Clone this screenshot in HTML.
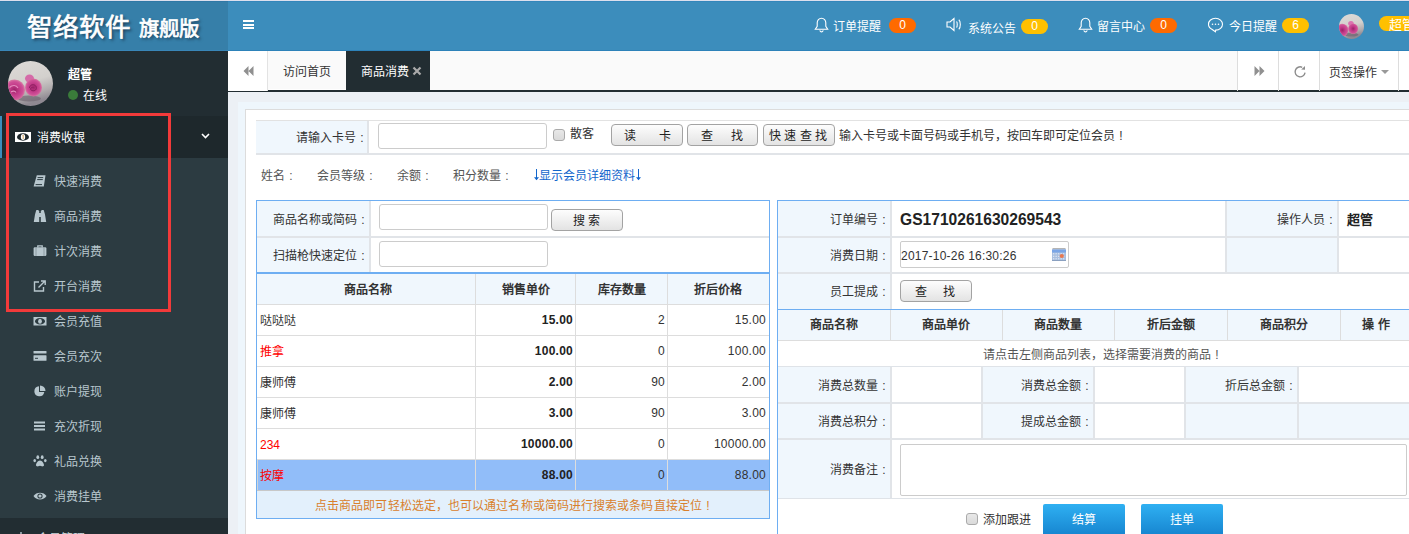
<!DOCTYPE html>
<html lang="zh-CN"><head><meta charset="utf-8">
<style>
*{box-sizing:border-box;margin:0;padding:0}
html,body{width:1409px;height:534px;overflow:hidden}
body{position:relative;font-family:"Liberation Sans",sans-serif;font-size:12px;color:#333;background:#ecf0f5}
.a{position:absolute}
.t{position:absolute;white-space:nowrap;line-height:1;margin-top:1px}
.c{display:inline-block;width:12px;text-align:center;font-style:normal}
/* header */
#topline{left:0;top:0;width:1409px;height:1px;background:#dcdfed}
#logo{left:0;top:1px;width:228px;height:50px;background:#367fa9}
#nav{left:228px;top:1px;width:1181px;height:50px;background:#3c8dbc}
.badge{position:absolute;height:15px;border-radius:8px;color:#fff;font-size:12px;line-height:15px;text-align:center;width:27px}
.orange{background:#ff6a00}
.yellow{background:#ffc000}
/* sidebar */
#side{left:0;top:51px;width:228px;height:483px;background:#222d32}
.mi{position:absolute;left:0;width:228px;height:35px;color:#b8c7ce;font-size:12px}
.mi span{position:absolute;left:54px;top:13px;line-height:12px}
.mi svg{position:absolute;left:33px;top:12px}
/* tabs */
#tabs{left:228px;top:51px;width:1181px;height:41px;background:#fafafa}
/* content */
.lbl{position:absolute;background:#f0f7fd;text-align:right}
.inp{position:absolute;background:#fff;border:1px solid #ccc;border-radius:3px}
.btn{position:absolute;border:1px solid #a3a3a3;border-radius:4px;background:linear-gradient(#fdfdfd,#e3e3e3);color:#222;font-size:12px;line-height:20px;text-align:center}
.hl{position:absolute;background:#ddd}
.bl{position:absolute;background:#6eaef2}
</style></head><body>

<!-- HEADER -->
<div id="topline" class="a"></div>
<div id="logo" class="a"></div>
<div id="nav" class="a"></div>
<div class="a" style="left:0;top:1px;width:228px;height:1px;background:#2f78a6"></div><div class="a" style="left:228px;top:1px;width:1181px;height:1px;background:#3386bb"></div>
<div class="a" style="left:0;top:50px;width:228px;height:1px;background:#3986b8"></div><div class="a" style="left:228px;top:50px;width:1181px;height:1px;background:#2d82b9"></div>
<div class="t" style="left:27px;top:13.5px;font-family:'Liberation Serif',serif;font-weight:normal;font-size:25.5px;color:#fff;-webkit-text-stroke:0.7px #fff;text-shadow:2px 2px 3px #1b3a52">智络软件</div>
<div class="t" style="left:139px;top:18px;font-family:'Liberation Serif',serif;font-weight:normal;font-size:20.5px;color:#fff;-webkit-text-stroke:0.7px #fff;text-shadow:2px 2px 3px #1b3a52">旗舰版</div>
<!-- hamburger -->
<div class="a" style="left:243px;top:20px;width:11px;height:2px;background:#fff"></div>
<div class="a" style="left:243px;top:24px;width:11px;height:2px;background:#fff"></div>
<div class="a" style="left:243px;top:27px;width:11px;height:2px;background:#fff"></div>

<!-- notifications -->
<svg class="a" style="left:814px;top:17px" width="15" height="16" viewBox="0 0 15 16"><path d="M7.5 1.2c-2.6 0-4.3 2-4.3 4.6v3.6L1.3 12.3h12.4l-1.9-2.9V5.8c0-2.6-1.7-4.6-4.3-4.6z M5.8 13.3c.3 1 .9 1.6 1.7 1.6s1.4-.6 1.7-1.6" fill="none" stroke="#fff" stroke-width="1.1"/></svg>
<div class="t" style="left:833px;top:20px;color:#fff;font-size:12px">订单提醒</div>
<div class="badge orange" style="left:889px;top:18px">0</div>

<svg class="a" style="left:946px;top:17px" width="17" height="15" viewBox="0 0 17 15"><path d="M1 5h3l4-3.5v12L4 10H1z" fill="none" stroke="#fff" stroke-width="1.1"/><path d="M10.5 4.5c1 .8 1 5.2 0 6M12.8 2.8c2 1.5 2 7.9 0 9.4" fill="none" stroke="#fff" stroke-width="1.1"/></svg>
<div class="t" style="left:968px;top:22px;color:#fff;font-size:12px">系统公告</div>
<div class="badge yellow" style="left:1021px;top:19px">0</div>

<svg class="a" style="left:1078px;top:17px" width="15" height="16" viewBox="0 0 15 16"><path d="M7.5 1.2c-2.6 0-4.3 2-4.3 4.6v3.6L1.3 12.3h12.4l-1.9-2.9V5.8c0-2.6-1.7-4.6-4.3-4.6z M5.8 13.3c.3 1 .9 1.6 1.7 1.6s1.4-.6 1.7-1.6" fill="none" stroke="#fff" stroke-width="1.1"/></svg>
<div class="t" style="left:1097px;top:20px;color:#fff;font-size:12px">留言中心</div>
<div class="badge orange" style="left:1150px;top:18px">0</div>

<svg class="a" style="left:1207px;top:17px" width="17" height="16" viewBox="0 0 17 16"><path d="M8.5 1.3c-4 0-7 2.6-7 5.9 0 2.2 1.4 4 3.4 5l3.5 2.5.3-1.6c3.9-.1 6.8-2.7 6.8-5.9S12.5 1.3 8.5 1.3z" fill="none" stroke="#fff" stroke-width="1.1"/><circle cx="5.5" cy="7.3" r=".8" fill="#fff"/><circle cx="8.5" cy="7.3" r=".8" fill="#fff"/><circle cx="11.5" cy="7.3" r=".8" fill="#fff"/></svg>
<div class="t" style="left:1229px;top:20px;color:#fff;font-size:12px">今日提醒</div>
<div class="badge yellow" style="left:1282px;top:18px">6</div>

<!-- header avatar -->
<svg class="a" style="left:1339px;top:14px" width="25" height="25" viewBox="0 0 45 45"><defs><clipPath id="c2"><circle cx="22.5" cy="22.5" r="22.5"/></clipPath></defs><g clip-path="url(#c2)"><rect width="45" height="45" fill="url(#bg1)"/><ellipse cx="22" cy="37" rx="13" ry="3.5" fill="#6e6470" opacity=".7"/><ellipse cx="6" cy="29" rx="11" ry="11.5" fill="url(#r1)"/><ellipse cx="21.5" cy="17" rx="5" ry="4.5" fill="#dc72b0"/><ellipse cx="25.5" cy="26.5" rx="9" ry="9.5" fill="url(#r1)"/></g></svg>
<div class="a" style="left:1379px;top:16px;width:40px;height:15px;border-radius:8px 0 0 8px;background:#ffc000"></div>
<div class="t" style="left:1389px;top:17px;color:#fff;font-size:13px">超管</div>

<!-- SIDEBAR -->
<div id="side" class="a"></div>
<svg class="a" style="left:8px;top:61px" width="45" height="45" viewBox="0 0 45 45"><defs><clipPath id="c1"><circle cx="22.5" cy="22.5" r="22.5"/></clipPath><linearGradient id="bg1" x1="0" y1="0" x2=".3" y2="1"><stop offset="0" stop-color="#dedbd8"/><stop offset=".55" stop-color="#d3d0cd"/><stop offset=".82" stop-color="#b0abad"/><stop offset="1" stop-color="#8f8992"/></linearGradient><radialGradient id="r1" cx=".5" cy=".5" r=".5"><stop offset="0" stop-color="#9c2268"/><stop offset=".45" stop-color="#c23a88"/><stop offset=".8" stop-color="#cf4f97"/><stop offset="1" stop-color="#d8739f" stop-opacity=".9"/></radialGradient></defs><g clip-path="url(#c1)"><rect width="45" height="45" fill="url(#bg1)"/><ellipse cx="21" cy="37.5" rx="12" ry="3" fill="#6a606c" opacity=".6"/><ellipse cx="6.5" cy="29" rx="10.5" ry="10.5" fill="url(#r1)"/><ellipse cx="21.5" cy="17.5" rx="4.5" ry="4" fill="#d56aa8"/><ellipse cx="25.5" cy="26.5" rx="8.5" ry="9" fill="url(#r1)"/><path d="M21.5 27c0-3.5 5-4.5 6.5-1.5s-1.5 5-4 4-1.5-3 .5-3" fill="none" stroke="#8a1f5e" stroke-width="1"/><path d="M1.5 26.5c3-3 7-2.5 8.5.5M3 31c2-1.5 4-1 5 .5" fill="none" stroke="#e48cbd" stroke-width="1.1"/></g></svg>
<div class="t" style="left:68px;top:68px;color:#fff;font-weight:bold;font-size:12px">超管</div>
<div class="a" style="left:68px;top:90px;width:10px;height:10px;border-radius:5px;background:#3a7b3a"></div>
<div class="t" style="left:83px;top:89px;color:#fff;font-size:12px">在线</div>

<!-- menu header -->
<div class="a" style="left:0;top:116px;width:228px;height:42px;background:#1e282c"></div>
<div class="a" style="left:0;top:116px;width:2px;height:42px;background:#3c8dbc"></div>
<svg class="a" style="left:15px;top:132px" width="16" height="10" viewBox="0 0 16 10"><rect x="0" y="0" width="16" height="10" fill="#fff"/><ellipse cx="8" cy="5" rx="6" ry="3.7" fill="#1e282c"/><ellipse cx="8" cy="5" rx="2.2" ry="3" fill="#fff"/><path d="M7.6 3.5l.6-.5v4" stroke="#c89040" stroke-width=".8" fill="none"/></svg>
<div class="t" style="left:37px;top:131px;color:#fff;font-size:12px">消费收银</div>
<svg class="a" style="left:201px;top:133px" width="9" height="6" viewBox="0 0 9 6"><path d="M1 1l3.5 3.5L8 1" fill="none" stroke="#fff" stroke-width="1.6"/></svg>

<!-- treeview -->
<div class="a" style="left:0;top:158px;width:228px;height:360px;background:#2c3b41"></div>

<div class="mi" style="top:163px"><svg width="14" height="12" viewBox="0 0 14 12"><path d="M3.8 0.3H12.5L10.8 11.6H0.6z" fill="#b8c7ce"/><path d="M4.6 2.6h5.6M4.2 4.6h5.6M2.6 9.6h6.4" stroke="#2c3b41" stroke-width="1"/></svg><span>快速消费</span></div>
<div class="mi" style="top:198px"><svg width="14" height="12" viewBox="0 0 14 12"><path d="M0.8 12L2 4.5 3 1h3.2v11zM13.2 12L12 4.5 11 1H7.8v11z" fill="#b8c7ce"/><rect x="5.5" y="3" width="3" height="4" fill="#b8c7ce"/><rect x="3.2" y="0" width="2.4" height="1.6" fill="#b8c7ce"/><rect x="8.4" y="0" width="2.4" height="1.6" fill="#b8c7ce"/></svg><span>商品消费</span></div>
<div class="mi" style="top:233px"><svg width="14" height="12" viewBox="0 0 14 12"><rect x="0.6" y="2.2" width="12.8" height="8.8" rx="1.3" fill="#b8c7ce"/><path d="M4.8 2.4V0.8h4.4v1.6" fill="none" stroke="#b8c7ce" stroke-width="1.3"/><path d="M3 2.5v8.5M11 2.5v8.5" stroke="#2c3b41" stroke-width=".6" opacity=".5"/></svg><span>计次消费</span></div>
<div class="mi" style="top:268px"><svg width="14" height="12" viewBox="0 0 14 12"><path d="M6 2H1.5v9h9V7" fill="none" stroke="#b8c7ce" stroke-width="1.4"/><path d="M5.5 7.5L12 1M8 1h4.2v4" fill="none" stroke="#b8c7ce" stroke-width="1.4"/></svg><span>开台消费</span></div>
<div class="mi" style="top:303px"><svg width="14" height="12" viewBox="0 0 14 12"><rect x="0.5" y="2" width="13" height="8.5" fill="#b8c7ce"/><ellipse cx="7" cy="6.25" rx="5" ry="3.2" fill="#2c3b41"/><ellipse cx="7" cy="6.25" rx="1.9" ry="2.6" fill="#b8c7ce"/></svg><span>会员充值</span></div>
<div class="mi" style="top:338px"><svg width="14" height="12" viewBox="0 0 14 12"><rect x="0.5" y="1" width="13" height="2.6" rx=".6" fill="#b8c7ce"/><rect x="0.5" y="5.2" width="13" height="5.6" rx=".6" fill="#b8c7ce"/><path d="M2 8.3h3" stroke="#2c3b41" stroke-width="1"/></svg><span>会员充次</span></div>
<div class="mi" style="top:373px"><svg width="14" height="12" viewBox="0 0 14 12"><path d="M6 1.2A5 5 0 1 0 11.3 7H6z" fill="#b8c7ce"/><path d="M7 0.5V6h5.5A5.5 5.5 0 0 0 7 .5z" fill="#b8c7ce"/></svg><span>账户提现</span></div>
<div class="mi" style="top:408px"><svg width="14" height="12" viewBox="0 0 14 12"><rect x="1" y="1.5" width="11" height="2" fill="#b8c7ce"/><rect x="1" y="5" width="11" height="2" fill="#b8c7ce"/><rect x="1" y="8.5" width="11" height="2" fill="#b8c7ce"/></svg><span>充次折现</span></div>
<div class="mi" style="top:443px"><svg width="14" height="12" viewBox="0 0 14 12"><path d="M7 5.5c-2.2 0-4 3-4 4.6 0 1.4 1.5 1.5 2.2 1.2.7-.3 1.1-.5 1.8-.5s1.1.2 1.8.5c.7.3 2.2.2 2.2-1.2 0-1.6-1.8-4.6-4-4.6z" fill="#b8c7ce"/><ellipse cx="4.8" cy="2.2" rx="1.4" ry="1.9" fill="#b8c7ce"/><ellipse cx="9.2" cy="2.2" rx="1.4" ry="1.9" fill="#b8c7ce"/><ellipse cx="1.7" cy="5.6" rx="1.3" ry="1.6" fill="#b8c7ce"/><ellipse cx="12.3" cy="5.6" rx="1.3" ry="1.6" fill="#b8c7ce"/></svg><span>礼品兑换</span></div>
<div class="mi" style="top:478px"><svg width="14" height="12" viewBox="0 0 14 12"><path d="M0.5 6C3 1.5 11 1.5 13.5 6 11 10.5 3 10.5 .5 6z" fill="#b8c7ce"/><circle cx="7" cy="6" r="2.6" fill="#2c3b41"/><circle cx="7" cy="6" r="1.6" fill="#b8c7ce"/></svg><span>消费挂单</span></div>

<div class="t" style="left:37px;top:532px;color:#c8d4da">会员管理</div>
<div class="a" style="left:20px;top:532px;width:2px;height:2px;background:#8a9aa2"></div>
<!-- red annotation -->
<div class="a" style="left:6px;top:113px;width:165px;height:199px;border:3px solid #f23a3a"></div>

<!-- TABS -->
<div id="tabs" class="a"></div>
<div class="a" style="left:228px;top:51px;width:40px;height:41px;background:#fff;border-right:1px solid #e3e3e3"></div>
<svg class="a" style="left:243px;top:66px" width="11" height="10" viewBox="0 0 11 10"><path d="M5.5 0v10L0.5 5zM10.5 0v10L5.5 5z" fill="#909090"/></svg>
<div class="a" style="left:268px;top:90px;width:1141px;height:2px;background:#222d32"></div>
<div class="a" style="left:228px;top:91px;width:40px;height:1px;background:#222d32"></div>
<div class="a" style="left:269px;top:89px;width:77px;height:1px;background:#fff"></div>
<div class="t" style="left:283px;top:65px;color:#333;font-size:12px">访问首页</div>
<div class="a" style="left:346px;top:51px;width:84px;height:41px;background:#222d32"></div>
<div class="t" style="left:361px;top:65px;color:#fff;font-size:12px">商品消费</div>
<svg class="a" style="left:412px;top:66px" width="10" height="10" viewBox="0 0 10 10"><path d="M1.5 1.5l7 7M8.5 1.5l-7 7" stroke="#aaa" stroke-width="2.2"/></svg>

<div class="a" style="left:1237px;top:51px;width:172px;height:39px;background:#fff"></div>
<div class="a" style="left:1237px;top:51px;width:1px;height:40px;background:#ddd"></div>
<div class="a" style="left:1278px;top:51px;width:1px;height:40px;background:#ddd"></div>
<div class="a" style="left:1319px;top:51px;width:1px;height:40px;background:#ddd"></div>
<div class="a" style="left:1398px;top:51px;width:1px;height:40px;background:#ddd"></div>
<svg class="a" style="left:1254px;top:66px" width="11" height="10" viewBox="0 0 11 10"><path d="M0.5 0v10L5.5 5zM5.5 0v10l5-5z" fill="#909090"/></svg>
<svg class="a" style="left:1293px;top:65px" width="14" height="14" viewBox="0 0 14 14"><path d="M12.05 7.6A5 5 0 1 1 9.2 2.3" fill="none" stroke="#8c8c8c" stroke-width="1.4"/><path d="M8.2 4.6L12 0.9V4.7z" fill="#8c8c8c"/></svg>
<div class="t" style="left:1329px;top:66px;color:#333;font-size:12px">页签操作</div>
<svg class="a" style="left:1381px;top:70px" width="8" height="5" viewBox="0 0 8 5"><path d="M0 0h8L4 4z" fill="#999"/></svg>

<!-- CONTENT -->
<div class="a" style="left:238px;top:102px;width:1171px;height:432px;background:#eef6fc"></div>
<div class="a" style="left:245px;top:109px;width:1164px;height:425px;background:#fff;border:1px solid #dcdcdc;border-right:none;border-bottom:none"></div>


<!-- card row -->
<div class="a" style="left:256px;top:120px;width:1153px;height:35px;border-top:1px solid #e2e2e2;border-bottom:2px solid #e1e4e8;background:#fff"></div>
<div class="lbl" style="left:256px;top:121px;width:113px;height:32px;border-right:2px solid #e1e4e8"></div>
<div class="t" style="left:296px;top:131px;color:#333">请输入卡号<i class="c">:</i></div>
<div class="inp" style="left:378px;top:123px;width:169px;height:26px"></div>
<div class="a" style="left:553px;top:129px;width:12px;height:12px;border:1px solid #aaa;border-radius:3px;background:linear-gradient(#e8e8e8,#dadada)"></div>
<div class="t" style="left:570px;top:127px;color:#333">散客</div>
<div class="btn" style="left:611px;top:124px;width:72px;height:22px"><span class="t" style="left:12px;top:4px">读</span><span class="t" style="left:47px;top:4px">卡</span></div>
<div class="btn" style="left:687px;top:124px;width:71px;height:22px"><span class="t" style="left:13px;top:4px">查</span><span class="t" style="left:43px;top:4px">找</span></div>
<div class="btn" style="left:763px;top:124px;width:72px;height:22px"><span class="t" style="left:5px;top:4px;letter-spacing:3.4px">快速查找</span></div>
<div class="t" style="left:839px;top:129px;color:#333">输入卡号或卡面号码或手机号，按回车即可定位会员<i class="c">!</i></div>

<!-- info row -->
<div class="t" style="left:261px;top:169px;color:#555">姓名<i class="c">:</i></div>
<div class="t" style="left:317px;top:169px;color:#555">会员等级<i class="c">:</i></div>
<div class="t" style="left:397px;top:169px;color:#555">余额<i class="c">:</i></div>
<div class="t" style="left:453px;top:169px;color:#555">积分数量<i class="c">:</i></div>
<svg class="a" style="left:533px;top:169px" width="6" height="12" viewBox="0 0 6 12"><path d="M3.5 0v10.5" stroke="#1266cc" stroke-width="1"/><path d="M1 8.3L3.5 11.3 6 8.3z" fill="#1266cc"/></svg><div class="t" style="left:539px;top:169px;color:#1266cc">显示会员详细资料</div><svg class="a" style="left:635px;top:169px" width="6" height="12" viewBox="0 0 6 12"><path d="M3.5 0v10.5" stroke="#1266cc" stroke-width="1"/><path d="M1 8.3L3.5 11.3 6 8.3z" fill="#1266cc"/></svg>

<!-- LEFT PANEL -->
<div class="a" style="left:256px;top:200px;width:514px;height:319px;border:1px solid #6eaef2;background:#fff"></div>
<div class="lbl" style="left:257px;top:201px;width:114px;height:71px;border-right:2px solid #e1e4e8"></div>
<div class="hl" style="left:257px;top:236px;width:512px;height:2px;background:#e1e4e8"></div>
<div class="t" style="left:273px;top:213px">商品名称或简码<i class="c">:</i></div>
<div class="t" style="left:273px;top:249px">扫描枪快速定位<i class="c">:</i></div>
<div class="inp" style="left:379px;top:204px;width:169px;height:26px"></div>
<div class="btn" style="left:551px;top:209px;width:72px;height:22px"><span class="t" style="left:21px;top:4px">搜</span><span class="t" style="left:36px;top:4px">索</span></div>
<div class="inp" style="left:379px;top:241px;width:169px;height:26px"></div>
<div class="bl" style="left:257px;top:272px;width:512px;height:1.5px"></div>
<!-- table header -->
<div class="a" style="left:257px;top:274px;width:512px;height:30px;background:#f0f7fd"></div>
<div class="hl" style="left:257px;top:304px;width:512px;height:1px"></div>
<div class="a" style="left:257px;top:460px;width:512px;height:32px;background:#91bdf9;border-bottom:2px solid #c9cdd2;border-left:1px solid #d0d4d8"></div>
<div class="hl" style="left:475px;top:274px;width:1px;height:216px"></div>
<div class="hl" style="left:575px;top:274px;width:1px;height:216px"></div>
<div class="hl" style="left:667px;top:274px;width:1px;height:216px"></div>
<div class="t" style="left:344px;top:283px;font-weight:bold;color:#333">商品名称</div>
<div class="t" style="left:502px;top:283px;font-weight:bold;color:#333">销售单价</div>
<div class="t" style="left:598px;top:283px;font-weight:bold;color:#333">库存数量</div>
<div class="t" style="left:694px;top:283px;font-weight:bold;color:#333">折后价格</div>
<div class="hl" style="left:257px;top:335px;width:512px;height:1px"></div>
<div class="t" style="left:260px;top:314px;color:#333">哒哒哒</div>
<div class="t" style="left:475px;width:98px;top:313px;text-align:right;letter-spacing:.25px;font-weight:bold;color:#222">15.00</div>
<div class="t" style="left:575px;width:90px;top:313px;text-align:right;letter-spacing:.25px;color:#333">2</div>
<div class="t" style="left:667px;width:99px;top:313px;text-align:right;letter-spacing:.25px;color:#333">15.00</div>
<div class="hl" style="left:257px;top:366px;width:512px;height:1px"></div>
<div class="t" style="left:260px;top:345px;color:#f00">推拿</div>
<div class="t" style="left:475px;width:98px;top:344px;text-align:right;letter-spacing:.25px;font-weight:bold;color:#222">100.00</div>
<div class="t" style="left:575px;width:90px;top:344px;text-align:right;letter-spacing:.25px;color:#333">0</div>
<div class="t" style="left:667px;width:99px;top:344px;text-align:right;letter-spacing:.25px;color:#333">100.00</div>
<div class="hl" style="left:257px;top:397px;width:512px;height:1px"></div>
<div class="t" style="left:260px;top:376px;color:#333">康师傅</div>
<div class="t" style="left:475px;width:98px;top:375px;text-align:right;letter-spacing:.25px;font-weight:bold;color:#222">2.00</div>
<div class="t" style="left:575px;width:90px;top:375px;text-align:right;letter-spacing:.25px;color:#333">90</div>
<div class="t" style="left:667px;width:99px;top:375px;text-align:right;letter-spacing:.25px;color:#333">2.00</div>
<div class="hl" style="left:257px;top:428px;width:512px;height:1px"></div>
<div class="t" style="left:260px;top:407px;color:#333">康师傅</div>
<div class="t" style="left:475px;width:98px;top:406px;text-align:right;letter-spacing:.25px;font-weight:bold;color:#222">3.00</div>
<div class="t" style="left:575px;width:90px;top:406px;text-align:right;letter-spacing:.25px;color:#333">90</div>
<div class="t" style="left:667px;width:99px;top:406px;text-align:right;letter-spacing:.25px;color:#333">3.00</div>
<div class="hl" style="left:257px;top:459px;width:512px;height:1px"></div>
<div class="t" style="left:260px;top:438px;color:#f00">234</div>
<div class="t" style="left:475px;width:98px;top:437px;text-align:right;letter-spacing:.25px;font-weight:bold;color:#222">10000.00</div>
<div class="t" style="left:575px;width:90px;top:437px;text-align:right;letter-spacing:.25px;color:#333">0</div>
<div class="t" style="left:667px;width:99px;top:437px;text-align:right;letter-spacing:.25px;color:#333">10000.00</div>
<div class="t" style="left:260px;top:469px;color:#f00">按摩</div>
<div class="t" style="left:475px;width:98px;top:468px;text-align:right;letter-spacing:.25px;font-weight:bold;color:#222">88.00</div>
<div class="t" style="left:575px;width:90px;top:468px;text-align:right;letter-spacing:.25px;color:#333">0</div>
<div class="t" style="left:667px;width:99px;top:468px;text-align:right;letter-spacing:.25px;color:#333">88.00</div>

<div class="hl" style="left:257px;top:490px;width:512px;height:1px;background:#c8c8c8"></div>
<div class="a" style="left:257px;top:491px;width:512px;height:27px;background:#e3f0fc"></div>
<div class="t" style="left:315px;top:499px;color:#d9802c;letter-spacing:0.09px">点击商品即可轻松选定，也可以通过名称或简码进行搜索或条码直接定位<i class="c">!</i></div>

<!-- RIGHT PANEL -->
<div class="a" style="left:777px;top:200px;width:640px;height:340px;border-left:1px solid #6eaef2;border-top:1px solid #6eaef2;background:#fff"></div>
<div class="lbl" style="left:778px;top:201px;width:114px;height:108px;border-right:2px solid #e1e4e8"></div>
<div class="lbl" style="left:1225px;top:201px;width:114px;height:71px;border-right:2px solid #e1e4e8;border-left:2px solid #e1e4e8"></div>
<div class="hl" style="left:778px;top:236px;width:631px;height:2px;background:#e1e4e8"></div>
<div class="hl" style="left:778px;top:272px;width:631px;height:2px;background:#e1e4e8"></div>
<div class="t" style="left:830px;top:213px">订单编号<i class="c">:</i></div>
<div class="t" style="left:830px;top:249px">消费日期<i class="c">:</i></div>
<div class="t" style="left:830px;top:285px">员工提成<i class="c">:</i></div>
<div class="t" style="left:1277px;top:213px">操作人员<i class="c">:</i></div>
<div class="t" style="left:900px;top:211px;font-weight:bold;font-size:15.6px;color:#222">GS1710261630269543</div>
<div class="t" style="left:1347px;top:212px;font-weight:bold;font-size:13px;color:#222">超管</div>
<div class="inp" style="left:900px;top:241px;width:169px;height:27px;border-radius:2px"></div>
<div class="t" style="left:901px;top:248.5px;color:#333;font-size:12px;letter-spacing:.22px">2017-10-26 16:30:26</div>
<svg class="a" style="left:1052px;top:248px" width="14" height="13" viewBox="0 0 14 13"><rect x="0.5" y="0" width="13" height="1.6" fill="#b5b5b5"/><rect x="0" y="1.5" width="14" height="11" fill="#a9bfdf"/><rect x="0" y="1.5" width="14" height="3" fill="#7aa5e6"/><path d="M1 5.8h12M1 8.3h12M1 10.8h12" stroke="#eef3fb" stroke-width=".9" stroke-dasharray="1.3 1.2"/><circle cx="9.8" cy="8" r="2.1" fill="#e8784f"/><rect x="0" y="12" width="14" height="1" fill="#8aa0c0"/></svg>
<div class="btn" style="left:900px;top:280px;width:72px;height:22px"><span class="t" style="left:14px;top:4px">查</span><span class="t" style="left:42px;top:4px">找</span></div>
<div class="bl" style="left:778px;top:309px;width:631px;height:1px"></div>
<div class="a" style="left:778px;top:310px;width:631px;height:30px;background:#f0f7fd"></div>
<div class="hl" style="left:778px;top:340px;width:631px;height:1px"></div>
<div class="t" style="left:778px;width:112px;top:318px;text-align:center;font-weight:bold;color:#333">商品名称</div>
<div class="hl" style="left:890px;top:310px;width:1px;height:30px"></div>
<div class="t" style="left:890px;width:112px;top:318px;text-align:center;font-weight:bold;color:#333">商品单价</div>
<div class="hl" style="left:1002px;top:310px;width:1px;height:30px"></div>
<div class="t" style="left:1002px;width:112px;top:318px;text-align:center;font-weight:bold;color:#333">商品数量</div>
<div class="hl" style="left:1114px;top:310px;width:1px;height:30px"></div>
<div class="t" style="left:1114px;width:113px;top:318px;text-align:center;font-weight:bold;color:#333">折后金额</div>
<div class="hl" style="left:1227px;top:310px;width:1px;height:30px"></div>
<div class="t" style="left:1227px;width:113px;top:318px;text-align:center;font-weight:bold;color:#333">商品积分</div>
<div class="hl" style="left:1340px;top:310px;width:1px;height:30px"></div>
<div class="t" style="left:1340px;width:72px;top:318px;text-align:center;font-weight:bold;color:#333">操 作</div>

<div class="t" style="left:983px;top:348px;color:#555">请点击左侧商品列表，选择需要消费的商品<i class="c">!</i></div>
<div class="hl" style="left:778px;top:366px;width:631px;height:1px;background:#dfe3e8"></div>
<div class="lbl" style="left:778px;top:367px;width:114px;height:131px;border-right:2px solid #e1e4e8"></div>
<div class="lbl" style="left:981px;top:367px;width:114px;height:71px;border-right:2px solid #e1e4e8;border-left:2px solid #e1e4e8"></div>
<div class="lbl" style="left:1184px;top:367px;width:115px;height:71px;border-right:2px solid #e1e4e8;border-left:2px solid #e1e4e8"></div>
<div class="a" style="left:1299px;top:403px;width:110px;height:35px;background:#f0f7fd"></div>
<div class="hl" style="left:778px;top:402px;width:631px;height:2px;background:#e1e4e8"></div>
<div class="hl" style="left:778px;top:438px;width:631px;height:2px;background:#e1e4e8"></div>
<div class="hl" style="left:778px;top:498px;width:631px;height:1px;background:#dfe3e8"></div>
<div class="t" style="left:818px;top:379px">消费总数量<i class="c">:</i></div>
<div class="t" style="left:1021px;top:379px">消费总金额<i class="c">:</i></div>
<div class="t" style="left:1225px;top:379px">折后总金额<i class="c">:</i></div>
<div class="t" style="left:818px;top:415px">消费总积分<i class="c">:</i></div>
<div class="t" style="left:1021px;top:415px">提成总金额<i class="c">:</i></div>
<div class="t" style="left:830px;top:463px">消费备注<i class="c">:</i></div>
<div class="inp" style="left:900px;top:444px;width:507px;height:52px;border-radius:2px"></div>
<div class="a" style="left:966px;top:513px;width:12px;height:12px;border:1px solid #aaa;border-radius:3px;background:linear-gradient(#e8e8e8,#dadada)"></div>
<div class="t" style="left:983px;top:513px;color:#333">添加跟进</div>
<div class="a" style="left:1043px;top:504px;width:82px;height:32px;background:linear-gradient(#2fb0f2,#1684cf);border-radius:2px"></div>
<div class="t" style="left:1072px;top:513px;color:#fff;font-size:12px">结算</div>
<div class="a" style="left:1141px;top:504px;width:82px;height:32px;background:linear-gradient(#2fb0f2,#1684cf);border-radius:2px"></div>
<div class="t" style="left:1170px;top:513px;color:#fff;font-size:12px">挂单</div>

</body></html>
